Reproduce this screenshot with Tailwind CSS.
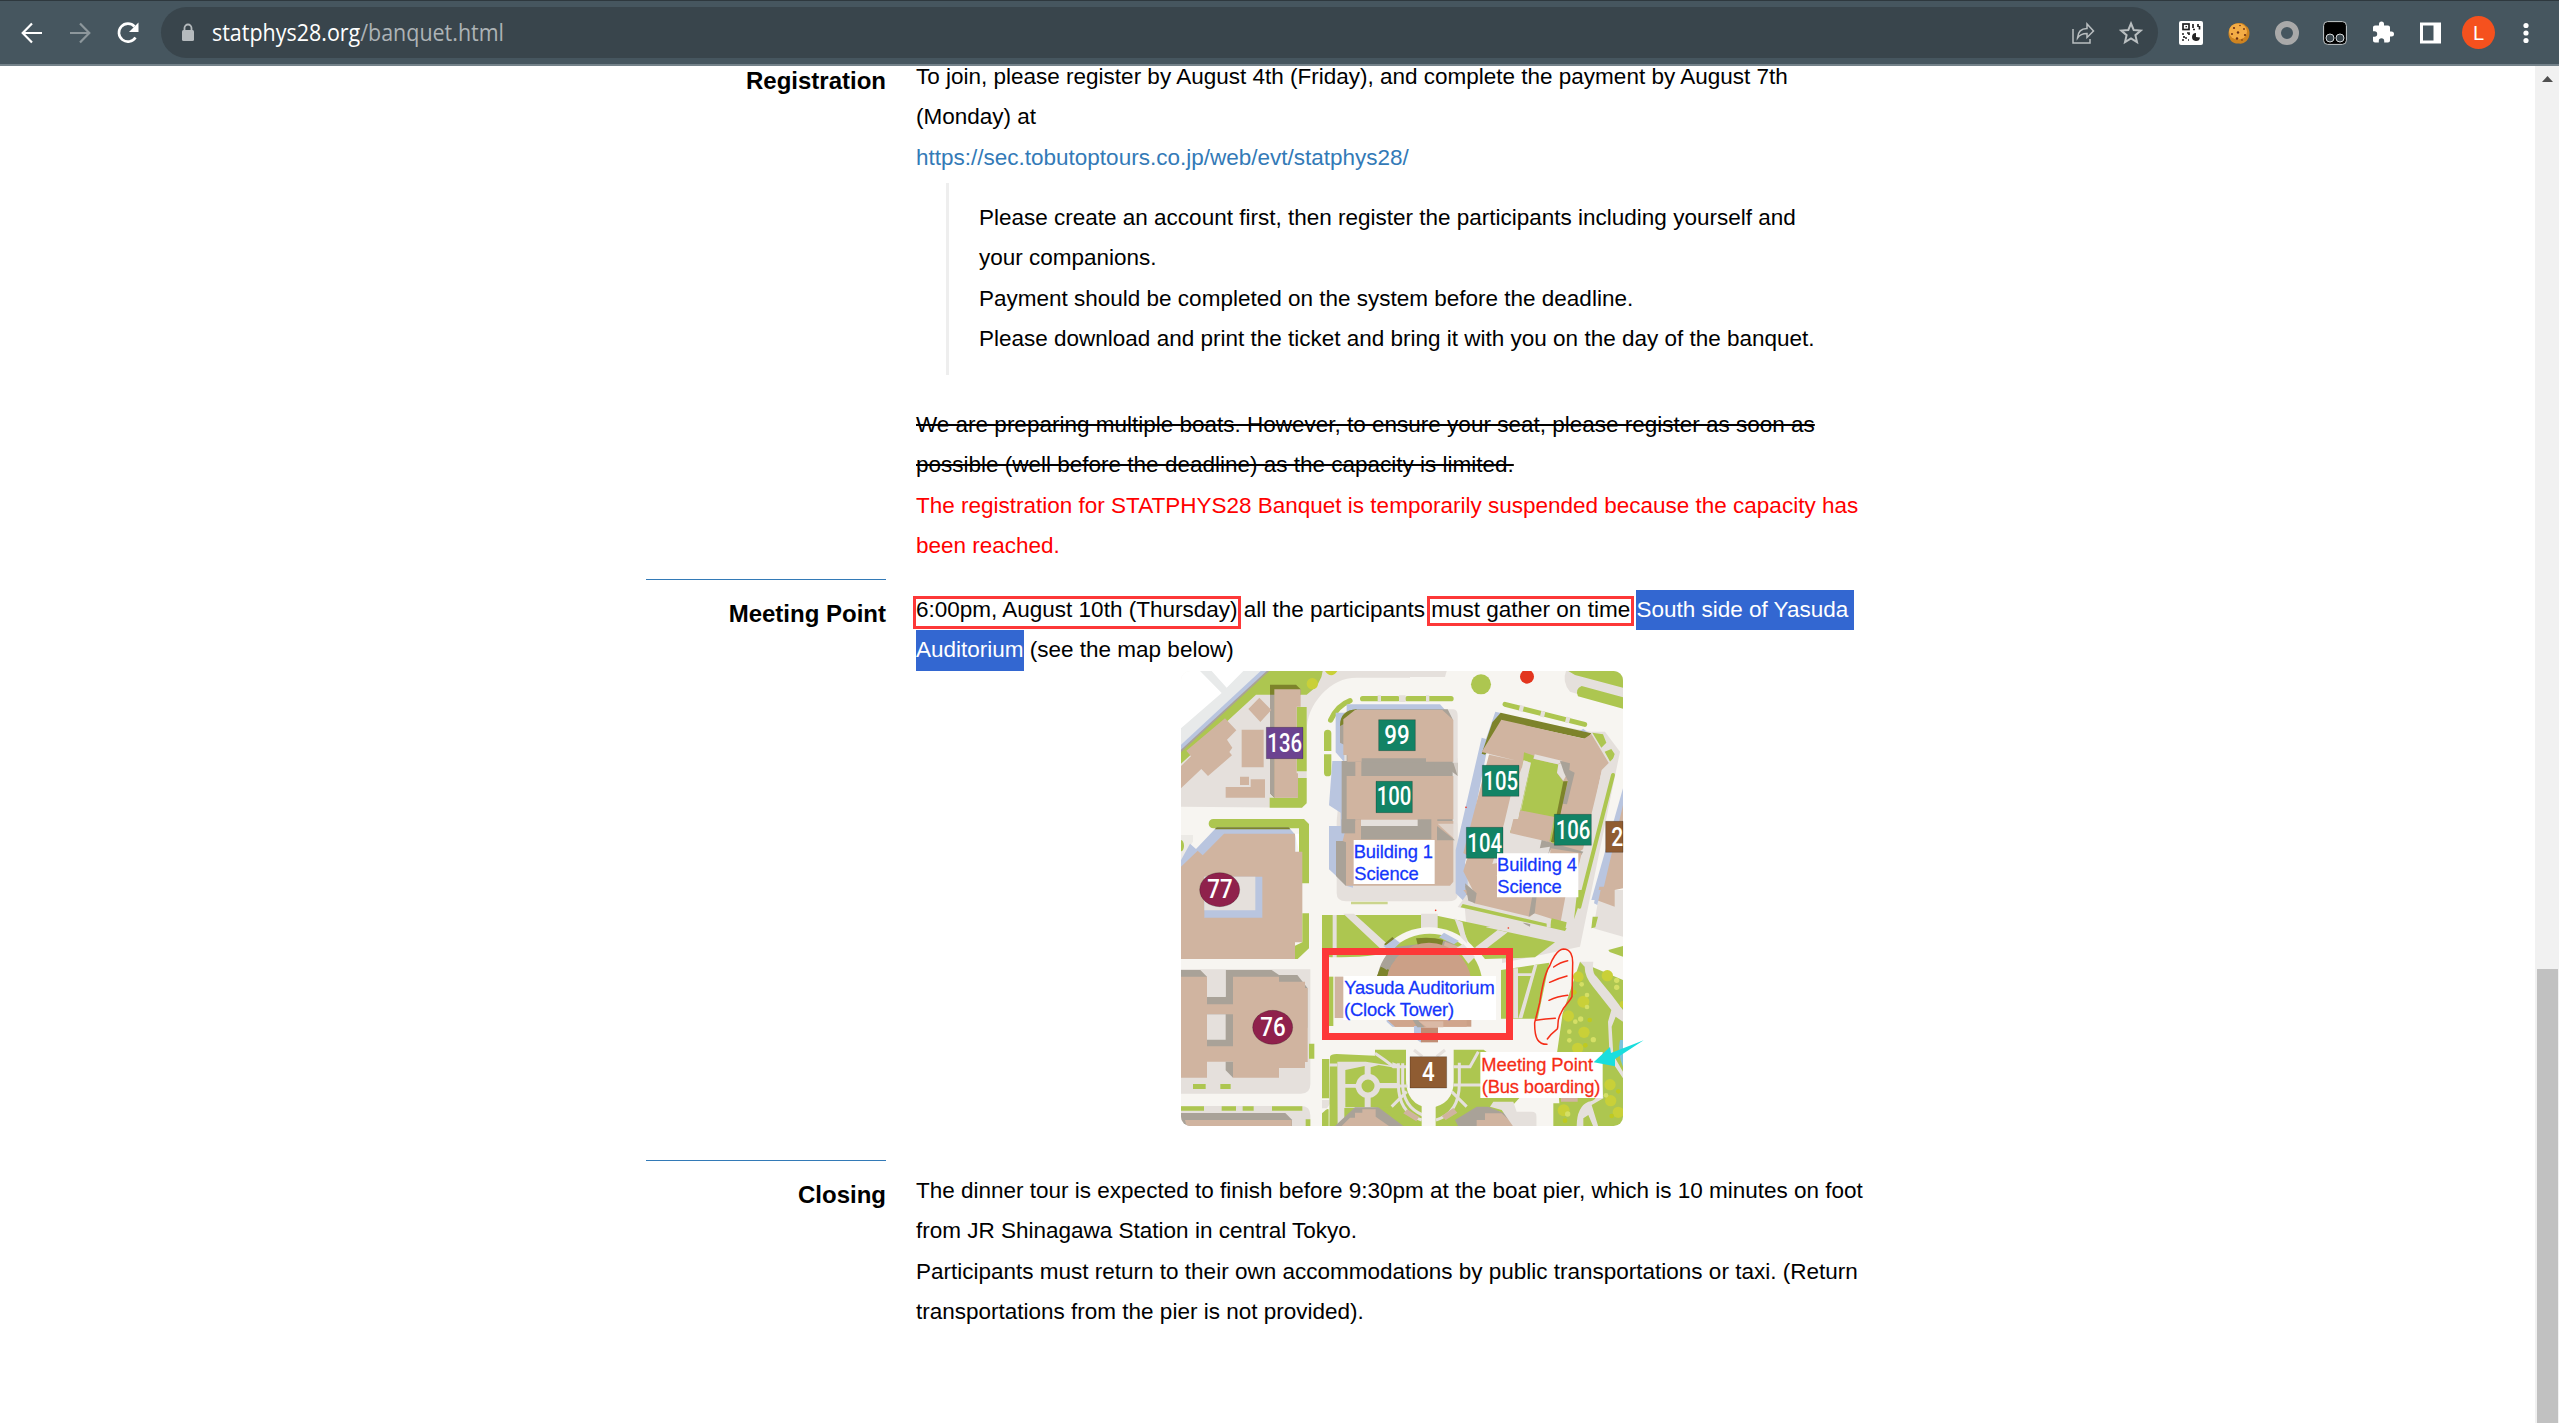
<!DOCTYPE html>
<html lang="en">
<head>
<meta charset="utf-8">
<title>STATPHYS28 Banquet</title>
<script src="https://cdn.jsdelivr.net/npm/@tailwindcss/browser@4"></script>
</head>
<body class="bg-white">
<div class="flex h-[1423px] w-[2559px] flex-col overflow-hidden font-['Liberation_Sans',Arial,sans-serif] text-black">
  <!-- Browser toolbar -->
  <header class="flex h-[66px] shrink-0 items-center border-t border-b-2 border-t-[#2e383e] border-b-[#74828a] bg-[#46565f] pr-[16px] pl-[20px]">
    <div class="flex w-[141px] items-center gap-[24px]">
      <svg class="size-6" viewBox="0 0 24 24" fill="none" stroke="#fff" stroke-width="2.2"><path d="M22 12H3M12 2.5 2.7 12l9.3 9.500"/></svg>
      <svg class="size-6" viewBox="0 0 24 24" fill="none" stroke="#8d979c" stroke-width="2.2"><path d="M2 12h19M12 2.500 21.300 12 12 21.500"/></svg>
      <svg class="size-6" viewBox="0 0 24 24"><path d="M19.500 16.500A9 9 0 1 1 18.500 5.500" fill="none" stroke="#fff" stroke-width="2.600"/><path d="M22.500 1.500v9.500H13z" fill="#fff"/></svg>
    </div>
    <div class="flex h-[51px] w-[1997px] items-center rounded-full bg-[#39454c] pr-[15px] pl-[20px]">
      <svg class="h-[20px] w-[14px]" viewBox="0 0 14 20"><rect x="1" y="7" width="12" height="11" rx="1.500" fill="#b5babd"/><path d="M3.500 8V5a3.500 3.500 0 0 1 7 0v3" fill="none" stroke="#b5babd" stroke-width="1.800"/></svg>
      <svg class="ml-[17px] h-[40px] w-[340px] overflow-visible" viewBox="0 0 340 40"><text x="0" y="27.500" font-family="Open Sans, Noto Sans, sans-serif" font-size="23.500" fill="#fff" textLength="292" lengthAdjust="spacingAndGlyphs">statphys28.org<tspan fill="#adb3b6">/banquet.html</tspan></text></svg>
      <div class="ml-auto flex items-center gap-[24px]">
        <svg class="size-6" viewBox="0 0 24 24" fill="none" stroke="#b9bec0" stroke-width="1.500"><path d="M2 8v14h17v-4"/><path d="M6.500 17C7 10 10 7.500 16 7.500V3l6.500 7-6.500 6.500V12.500C11 12.500 8.500 14 6.500 17Z"/></svg>
        <svg class="size-6" viewBox="0 0 24 24" fill="none" stroke="#b9bec0" stroke-width="2"><path d="m12 2.500 2.700 6.500 7 .6-5.300 4.600 1.600 6.900L12 17.400l-6 3.700 1.600-6.900-5.300-4.600 7-.6z"/></svg>
      </div>
    </div>
    <div class="ml-[21px] flex items-center">
      <svg class="size-6" viewBox="0 0 24 24"><rect width="24" height="24" rx="2" fill="#fff"/><g fill="none" stroke="#222" stroke-width="1.700"><rect x="4" y="3" width="6" height="5.500"/><path d="M14 3v4M19 3v3M20.500 5v3.500M14 8.500h2M3 13h2M8 12h2v2M5 15v2M8 17H6M3 19h2M9 19h1"/></g><path d="M6.500 5h1.500v1.300H6.500z" fill="#222"/><path d="M17 12v4l4 .5a4 4 0 1 1-4-4.500z" fill="#222"/></svg>
      <svg class="ml-6 size-6" viewBox="0 0 24 24"><path d="M12 2c3 0 5 .5 7 3 2 1 3.500 4 3.500 7s-1 6-3 8-5 3-8 2.500C8 23 4 21 3 18c-1.500-2-2-6-1-9 1-4 5-7 10-7z" fill="#cf8420"/><ellipse cx="11" cy="10.500" rx="9" ry="8" fill="#f3ac45"/><g fill="#6b2e14"><circle cx="7" cy="7" r="1.100"/><circle cx="13" cy="4.500" r=".8"/><circle cx="17" cy="8" r=".9"/><circle cx="11" cy="11.500" r="1.200"/><circle cx="5" cy="13" r="1"/><circle cx="18" cy="14" r="1.100"/><circle cx="10" cy="17.500" r="1.200"/><circle cx="15" cy="19" r=".8"/></g></svg>
      <svg class="ml-6 size-6" viewBox="0 0 24 24"><circle cx="12" cy="12" r="9" fill="none" stroke="#a9a9a9" stroke-width="6"/></svg>
      <svg class="ml-6 size-6" viewBox="0 0 24 24"><rect x=".6" y=".6" width="22.800" height="22.800" rx="4" fill="#000" stroke="#c4cacc" stroke-width="1"/><g fill="#37434a" stroke="#d7dadb"><circle cx="7" cy="17" r="4"/><circle cx="17" cy="17" r="4"/></g></svg>
      <svg class="ml-6 size-6" viewBox="0 0 24 24"><path d="M20.500 11H19V7c0-1.100-.9-2-2-2h-4V3.500a2.500 2.500 0 0 0-5 0V5H4c-1.100 0-2 .9-2 2v3.800h1.500a2.700 2.700 0 0 1 0 5.400H2V20c0 1.100.9 2 2 2h3.800v-1.500a2.700 2.700 0 0 1 5.400 0V22H17c1.100 0 2-.9 2-2v-4h1.500a2.500 2.500 0 0 0 0-5z" fill="#fff" transform="translate(0 -.5)"/></svg>
      <svg class="ml-6 size-6" viewBox="0 0 24 24"><path d="M1 1.500h21v21H1z" fill="#fff"/><path d="M4 4.500h10.500v15H4z" fill="#46565f"/></svg>
      <div class="ml-[19px] flex size-[33px] items-center justify-center rounded-full bg-[#f5511e] text-xl leading-none text-white">L</div>
      <svg class="ml-[19px] size-6" viewBox="0 0 24 24" fill="#fff"><circle cx="12" cy="4.500" r="2.600"/><circle cx="12" cy="12" r="2.600"/><circle cx="12" cy="19.500" r="2.600"/></svg>
    </div>
  </header>

  <div class="flex min-h-0 flex-1">
    <main class="min-w-0 flex-1 overflow-hidden pl-[646px]">
      <dl class="-mt-[9.5px] w-[1242px] text-[22.5px] leading-[40.5px]">
        <div class="flex h-[522.5px] gap-[30px]">
          <dt class="w-[240px] pt-[4.5px] text-right text-[24px] font-bold">Registration</dt>
          <dd class="w-[972px] whitespace-nowrap">
            <p>To join, please register by August 4th (Friday), and complete the payment by August 7th<br>(Monday) at<br><a class="text-[#337ab7]">https://sec.tobutoptours.co.jp/web/evt/statphys28/</a></p>
            <blockquote class="mt-[4.5px] mb-[30px] ml-[30px] border-l-3 border-[#eee] py-[15px] pl-[30px]">Please create an account first, then register the participants including yourself and<br>your companions.<br>Payment should be completed on the system before the deadline.<br>Please download and print the ticket and bring it with you on the day of the banquet.</blockquote>
            <p class="line-through decoration-[2px]">We are preparing multiple boats. However, to ensure your seat, please register as soon as<br>possible (well before the deadline) as the capacity is limited.</p>
            <p class="text-[#f00]">The registration for STATPHYS28 Banquet is temporarily suspended because the capacity has<br>been reached.</p>
          </dd>
        </div>

        <div class="flex h-[581px] gap-[30px]">
          <dt class="w-[240px] text-right text-[24px] font-bold"><div class="border-t border-[#337ab7] pt-[14px]">Meeting Point</div></dt>
          <dd class="w-[972px] pt-[10.6px] whitespace-nowrap">
            <p><span class="relative">6:00pm, August 10th (Thursday)<span class="absolute -top-[1px] -right-[4px] -left-[3px] h-[33px] border-3 border-[#fd3838]"></span></span> all the participants <span class="relative">must gather on time<span class="absolute -top-[1px] -right-[4px] -left-[4px] h-[30px] border-3 border-[#fd3838]"></span></span> <span class="inline-block h-[40.5px] bg-[#3367d1] pr-[6px] align-top text-white">South side of Yasuda</span><br><span class="inline-block h-[40.5px] bg-[#3367d1] align-top text-white">Auditorium</span> (see the map below)</p>
            <svg class="mx-auto mt-[0.4px] block h-[455px] w-[442px] overflow-visible" viewBox="0 0 1326 1365" font-family="Liberation Sans, Arial, sans-serif">
              <defs><clipPath id="round"><rect width="1326" height="1365" rx="28"/></clipPath></defs>
              <g clip-path="url(#round)">
                <rect width="1326" height="1365" fill="#f7f5f1"/>
                <!-- north west block -->
                <g transform="translate(-33 -33)">
                  <path d="M33 33H290L33 270z" fill="#fff"/>
                  <path d="M90 33h35l45 50 50-50h60L33 255v-50L155 99z" fill="#e8eaea"/>
                  <path d="M33 440V290L290 33h430v20H560q-60 0-105 50-45 50-45 110v210l-15 20z" fill="#e5e0dc"/>
                  <path d="M272 33h20L33 272v-18z" fill="#b9c5df"/>
                  <path d="M290 33h10L33 281v-12z" fill="#a9a298"/>
                  <path d="M298 33h160q-3 40-48 71H258L33 311v-34z" fill="#adc650"/>
                  <circle cx="427" cy="71" r="17" fill="#c9d038"/><path d="M465 33h37q-18 26-37 0zM560 32h10M640 32h5" fill="#c9d038"/>
                  <path d="M300 74h78l14 14v16h-78v310l-14-14z" fill="#7d832b"/><path d="M300 104h14v310l-14-14z" fill="#a9a298"/>
                  <path d="M380 141h30v193h-30zM383 354h27v76l-14 13h-97v-30h84z" fill="#adc650"/>
                  <g fill="#d0b4a0"><path d="M313 88h79v52h-12v200h4v73h-71zM268 113l36 37-33 36-36-39zM215 209h66v113h-66zM210 350h27v25h-27zM167 381h75v-23h43v55H167zM165 175l34 36-28 28 16 24-9 13 8 10-72 62-20-21-62 59v-67l31-30-14-17z"/></g>
                  <path d="M33 525h36v20l-10 15-26 40z" fill="#eceae6"/>
                  <ellipse cx="33" cy="557" rx="9" ry="17" fill="#adc650"/>
                  <path d="M130 477h272l15 15v178h-30V505H130a13 13 0 0 1 0-28z" fill="#adc650"/>
                  <path d="M140 502h216l20 22v52h-12L165 560l-70 60-62 40v-60l27-49 18 16z" fill="#b9c5df"/>
                  <path d="M140 502h216l5 6H134z" fill="#7d832b"/>
                  <path d="M375 521h12v55z" fill="#fff"/>
                  <path d="M162 521h213v54h22v272h-22v50H33V620l50-48 15 14z" fill="#d0b4a0"/>
                  <path d="M103 650h174v123H103z" fill="#b9c5df"/><path d="M103 650h153v101H103z" fill="#e5e0dc"/>
                  <path d="M397 760h20v105l-34 32h-8v-40l22-10z" fill="#adc650"/>
                </g>
                <!-- science building 1 -->
                <path d="M640 0h157l-5 18H520z" fill="#e5e0dc"/>
                <g fill="none" stroke="#adc650" stroke-width="16" stroke-linecap="round">
                  <path d="M449 147q20-44 58-58"/><path d="M545 83h104M680 83h130"/>
                </g>
                <path d="M429 187a11 11 0 0 1 22 0v53h-22zM429 250h22v55a11 11 0 0 1-22 0z" fill="#adc650"/>
                <path d="M590 73h10v20h-10zM654 73h20v20h-20zM735 73h10v20h-10z" fill="#e5e0dc"/>
                <path d="M500 115h317q13 0 13 20v536q0 20-30 20H495q-28 0-28-25V450z" fill="#e5e0dc"/>
                <path d="M497 100h280l22 24H490v150l-26-30V125h33zM454 270h40v250h22v130l-18-5-54-50V465h35v-40l-35-22z" fill="#b9c5df"/>
                <path d="M477 165q0-50 55-50h268l15 30v340H482V270h15v-45l-20-10zM465 510h30v135l-30-30z" fill="#a9a298"/>
                <path d="M477 165q0-48 50-50l-10 30z" fill="#7d832b"/>
                <path d="M487 145l35-28h262l33 30v125h-82v-10H542v10h-43V252h-12zM497 315h320v130h-48l-2 50H540v-50h-43zM485 510l15-60h317v182l-10 12H495v-130z" fill="#d0b4a0"/>
                <path d="M482 445h41v42h-41z" fill="#a9a298"/>
                <path d="M523 273h18v42h-18zM523 445h17v48h-17z" fill="#d0b4a0"/>
                <path d="M543 275h218v38H543z" fill="#a9a298"/><path d="M540 446h180v20H540z" fill="#e5e0dc"/><path d="M540 465h170v-20h41v60H540z" fill="#a9a298"/>
                <path d="M778 275h52v40zM768 465l54 43h-54z" fill="#a9a298"/><path d="M817 275l13-15v55zM770 458h60v55z" fill="#e5e0dc" opacity=".7"/>
                <path d="M510 692h110v8H510z" fill="#cbd58c"/>
                <!-- science building 4 -->
                <g transform="translate(657 -33)">
                  <path d="M505 33h164v110L510 95q-25-30-12-62z" fill="#e5e0dc"/>
                  <path d="M505 33h142q22 0 22 22v28L525 45zM545 78l124 34v34l-135-37q-10-22 11-31z" fill="#adc650"/>
                  <circle cx="243" cy="73" r="30" fill="#adc650"/><circle cx="381" cy="50" r="21" fill="#e3351e"/>
                  <path d="M315 133 554 193" stroke="#adc650" stroke-width="15" stroke-linecap="round"/><path d="m358 144 12 3M422 161l12 3M497 178l12 3" stroke="#e5e0dc" stroke-width="18"/>
                  <path d="M190 690 290 165l285 50h40l45 60L540 860 210 930z" fill="#e5e0dc"/>
                  <path d="M286 155l20 5-46 115-65 335 8 15v110l-36-35V570l78-337 13 4zM540 212l10-6 14 12-4 8z" fill="#b9c5df"/>
                  <path d="M277 187 302 158l272 62-12 18-256-56-18 76 85 20-5 10-99-21-14 17-10-3z" fill="#7d832b"/>
                  <path d="M577 218l32 5 10 25-15 15zM614 275l20-8 10 15-10 30z" fill="#adc650"/>
                  <path d="M304 179 552 236l22-14 56 93-25 20-56 233-50 32-30 140-69 24-180-70-30-60 10-35 7-10-17-10 77-295 105 23-40 100-20 85-35 120 130-28 45-180-12-80-195-48z" fill="#d0b4a0"/>
                  <path d="M372 277l30 10-3 9 80 18-8 25 20 28 12-4-33 140-5 60-10-12 5-80-107-18z" fill="#adc650"/>
                  <path d="M370 300l22 8-40 170-22 40-40 130 110 50 60-120-30-50 60 15-45-20-90-35 33-150z" fill="#e5e0dc"/>
                  <path d="M404 283l84 20-15 10-72-17zM475 312l20-5 3 40-8 15-19-24z" fill="#e5e0dc"/>
                  <path d="M372 305 395 308 362 450l98 20-5 75-125-28 15-40 10 0z" fill="#adc650"/><path d="M370 302l23 6-38 168h-18z" fill="#e5e0dc"/>
                  <path d="M360 451l103 20-15 75-118-27 10-42h15z" fill="#d0b4a0"/>
                  <path d="M480 302l30 8-2 20 16 8-23 95-14-2 17-68-12-25z" fill="#a9a298"/><path d="M490 364h13l-40 182h-10z" fill="#7d832b"/>
                  <path d="M425 540l125 35-8 12-92-17-50 150-10 80-20-10z" fill="#a9a298"/>
                  <path d="M452 565l93 15-40 165-70-20z" fill="#d0b4a0"/>
                  <path d="M450 560l-35 145-85-20 20-110z" fill="#e5e0dc"/>
                  <path d="M605 330l50-50-115 480-20-5z" fill="#e5e0dc"/><path d="M639 345 538 740" stroke="#adc650" stroke-width="12" stroke-linecap="round"/>
                  <path d="M669 385v60l-55 245-25 30h-15z" fill="#b9c5df"/><path d="M669 435v250l-25 5-10 50-35-5z" fill="#d0b4a0"/>
                  <path d="M195 675l33 35v30h-25z" fill="#a9a298"/>
                </g>
                <!-- lawns around the auditorium -->
                <g transform="translate(417 537)">
                  <path d="M6 195h295l50 2 185 39 4 40-90 50-200 0H6z" fill="#adc650"/>
                  <path d="M38 195h12v130H38zM70 191h32l110 100-20 15zM303 191h50v60h-50zM403 205l15 8 30 70-18-5zM500 230h40v40l-40 30-40 0z" fill="#e5e0dc"/>
                  <path d="M6 320q90 5 160-5h380v210H6z" fill="#f7f5f1"/>
                  <path d="M6 380h34v148H6z" fill="#adc650"/>
                  <path d="M44 380h62v124H44z" fill="#d0b4a0"/>
                  <circle cx="328" cy="410" r="178" fill="#f7f5f1"/>
                  <path d="M170 410a158 158 0 0 1 318 0z" fill="#adc650"/>
                  <path d="M170 400a158 158 0 0 1 50-108l160-20 30 15-20 30-150 10-50 75z" fill="#a9a298"/>
                  <path d="M190 288l30-25 20 15-28 28zM357 262l15-14 45 25-15 10z" fill="#b9c5df"/>
                  <path d="M288 265q45-6 82 5l-6 22-70-5zM170 380l12-30 25 9-6 25zM192 283l25-22 6 5-26 20z" fill="#7d832b"/>
                  <path d="M375 275l42 15-18 25-30-20z" fill="#d0b4a0"/><path d="M410 293l20-12 35 40-20 20z" fill="#e5e0dc"/>
                  <path d="M200 390a128 128 0 0 1 254 0v140H225z" fill="#cba087"/><path d="M200 360 226 330 216 317l-30 33z" fill="#a9a298"/>
                  <path d="M200 510l22 20h218v-20z" fill="#d0a58c"/><path d="M200 508l25 22h-8l-17-15zM282 528h22v50l-22-15z" fill="#b9c5df"/>
                  <path d="M303 532h51v45h-51z" fill="#c18d74"/><path d="M278 510h16l20 22h-22z" fill="#a9a298"/><path d="M296 514h74v18h-50z" fill="#dab9a6"/>
                </g>
                <g transform="translate(657 657)">
                  <path d="M210 0h285l20-20 20 0-12 115-10 28-35 0-305-72z" fill="#e5e0dc"/>
                  <path d="M190 0h310l-18 95-80-25-12 10-168-40z" fill="#d0b4a0"/><path d="M195 -20l35 30-5 30-20-8zM400 0h12l-8 70-18 10z" fill="#a9a298"/>
                  <path d="M188 42 500 115l-5 8L182 52zM455 85l45 12-4 20-46-12zM522 88l30-88-20 0z" fill="#adc650"/><path d="M440 93h12v20h-12z" fill="#e5e0dc"/>
                  <path d="M185 96 465 157l-60 45-150 5-30-35z" fill="#adc650"/><path d="M293 120l30 7-85 65-12-20zM170 90l17 6 15 65-20-20z" fill="#e5e0dc"/>
                  <path d="M600 0h69v140l-89-25z" fill="#e5e0dc"/><path d="M598-10h46v60l-55-20z" fill="#d0b4a0"/><path d="M590 0h12l-10 45-10-5z" fill="#b9c5df"/><path d="M578 80h16l-8 32-12 3zM625 180l44-12v32l-40-14z" fill="#adc650"/>
                  <path d="M303 240l145-22-35 168H303z" fill="#adc650"/><path d="M340 235h14v150h-14zM402 225h10l-45 160h-12zM340 250h60v8h-60z" fill="#e5e0dc"/>
                  <path d="M540 215l129 55v440H458v-70h20l-10-130 20-140z" fill="#adc650"/>
                  <path d="M540 215h40q-5 35 10 45l45 55 34 45v35l-22-15-12 30 5 85 29 50v20l-40-60-5-110 10-35-55-70q-25-30-25-60zM530 710q0-60 35-75 35-3 30-60l10-5 5 55-35 20 20 65h-15l-15-35-15 10v25z" fill="#e5e0dc"/>
                  <path d="M660 450h9v80q-18-40-9-80z" fill="#7cc4dc"/>
                  <g fill="#c9d038"><circle cx="535" cy="260" r="16"/><circle cx="622" cy="257" r="17"/><circle cx="550" cy="335" r="18"/><circle cx="505" cy="378" r="17"/><circle cx="552" cy="427" r="17"/><circle cx="533" cy="475" r="17"/><circle cx="630" cy="584" r="17"/><circle cx="632" cy="632" r="17"/><circle cx="491" cy="661" r="18"/><circle cx="655" cy="667" r="17"/><circle cx="669" cy="343" r="10"/></g>
                  <g fill="#bfca20"><circle cx="523" cy="307" r="7"/><circle cx="569" cy="390" r="7"/><circle cx="556" cy="466" r="7"/><circle cx="655" cy="604" r="7"/><circle cx="495" cy="692" r="7"/><circle cx="635" cy="678" r="7"/></g>
                  <g fill="#d5df65"><circle cx="545" cy="283" r="7"/><circle cx="561" cy="315" r="7"/><circle cx="561" cy="351" r="7"/><circle cx="542" cy="387" r="8"/><circle cx="526" cy="395" r="7"/><circle cx="508" cy="425" r="7"/><circle cx="580" cy="449" r="8"/><circle cx="508" cy="451" r="7"/><circle cx="650" cy="271" r="8"/><circle cx="650" cy="292" r="8"/><circle cx="618" cy="616" r="7"/><circle cx="503" cy="672" r="8"/></g>
                </g>
                <!-- formal gardens -->
                <g transform="translate(417 537)">
                  <path d="M6 627h22v118H6zM6 790q20-20 20-10v50H6z" fill="#adc650"/><path d="M28 720v30H6v25l15 0 20-30z" fill="#e5e0dc"/>
                  <path d="M30 620q2-8 20-8l115 5v-18h93v90q0 75 70 85 75-10 73-85v-90h90l120 90-8 50-120 130H245l-30-30H73v55H6l22-60z" fill="#adc650"/>
                  <path d="M52 635h85l80 12v-10l15 5v120l-75 12H73v50l-20 10z" fill="#e5e0dc"/>
                  <path d="M76 660 134 648v42l-27 12H76zM152 652l24-7 58 10v44h-54l-28-12zM76 713h30q12 20 28 22v37H76zM180 715h54q5 20 20 35l-30 22h-72v-38q20-5 28-19z" fill="#adc650"/>
                  <circle cx="144" cy="708" r="28" fill="#adc650" stroke="#e5e0dc" stroke-width="17"/>
                  <path d="M28 645h24M165 610q30 20 55 40h38M235 640v60q0 90 70 110M248 640v60q0 70 60 95M400 650h50l25-45M418 638v62q0 90-70 110M400 705h120M180 708h90M215 770l45-45M440 770l-45-45M282 600l25 20M375 600l-25 20" fill="none" stroke="#e5e0dc" stroke-width="9"/>
                  <path d="M262 600h14v90q0 57 52 57 55 0 55-57v-90h14v90q0 60-50 75v65h-42v-65q-43-15-43-75z" fill="#f7f5f1"/>
                  <path d="M250 790l12-12 35 22-8 14zM365 798l35-24 12 14-35 22z" fill="#d0b4a0"/>
                  <path d="M105 772h70l75 56H45z" fill="#a9a298"/><path d="M65 828l25-25h15v-15h22v-10h40v22l40 28zM455 828l40-35h25l20-10v45z" fill="#d0b4a0"/>
                </g>
                <g transform="translate(657 657)">
                  <path d="M165 690l65-40h35l145 60H175z" fill="#a9a298"/><path d="M230 710v-20h25v-20h50l45 40z" fill="#d0b4a0"/><path d="M270 650l35 10 35 50 70 0v-30q0-15-15-15h-45l-10-30h-60z" fill="#e5e0dc"/><path d="M410 620h50v90h-50z" fill="#f7f5f1"/><path d="M483 620h50v15h-50z" fill="#d0b4a0"/>
                </g>
                <!-- south west block -->
                <g transform="translate(-33 657)">
                  <path d="M33 238h388v345q0 28-28 28H33zM33 648h360q28 0 28 28v34H33z" fill="#e5e0dc"/>
                  <path d="M33 240h58l20 20v61h56v-81h138l22 15h55l30 38v120H33z" fill="#a9a298"/>
                  <path d="M111 240h56v80h-56z" fill="#e5e0dc"/>
                  <path d="M33 260h78v303H33zM189 260h138v15h78v19h8v222h-8v18h-78v29H189zM111 343h80v172h-80z" fill="#d0b4a0"/>
                  <path d="M111 373h78v96h-78zM167 515h22v48l-22-22z" fill="#a9a298"/><path d="M111 373h56v76h-56z" fill="#e5e0dc"/>
                  <path d="M417 461h16v45h-16zM69 582h38v15H69zM151 582h31v15h-31zM33 649h69v13H33zM155 649h43v13h-43zM218 649h33v13h-33zM306 649h91v13h-91zM407 688h14v22h-14z" fill="#adc650"/>
                  <path d="M33 669h313l20 20v21H33z" fill="#a9a298"/><path d="M45 690h320v20H50z" fill="#d0b4a0"/>
                </g>
              </g>
              <!-- numbered markers -->
              <g stroke="#00000055" stroke-width="2">
                <path d="M256 169h110v94H256z" fill="#6c4390"/><path d="M593 146h110v93H593zM585 331h109v94H585zM904 283h110v93H904zM856 469h110v93H856zM1120 430h111v93h-111z" fill="#128365"/>
                <path d="M1274 451h52v93h-52zM687 1157h110v94H687z" fill="#8f5c32"/>
                <ellipse cx="116" cy="656" rx="60" ry="51" fill="#8f214c"/><ellipse cx="275" cy="1069" rx="60" ry="51" fill="#8f214c"/>
              </g>
              <g fill="#fff" font-size="75" font-weight="500" font-family="Roboto, sans-serif" text-anchor="middle">
                <text x="311" y="242" textLength="104" lengthAdjust="spacingAndGlyphs">136</text>
                <text x="648" y="218" textLength="76" lengthAdjust="spacingAndGlyphs">99</text>
                <text x="639" y="403" textLength="104" lengthAdjust="spacingAndGlyphs">100</text>
                <text x="959" y="356" textLength="104" lengthAdjust="spacingAndGlyphs">105</text>
                <text x="911" y="542" textLength="104" lengthAdjust="spacingAndGlyphs">104</text>
                <text x="1176" y="503" textLength="104" lengthAdjust="spacingAndGlyphs">106</text>
                <text x="1309" y="524" textLength="36" lengthAdjust="spacingAndGlyphs">2</text>
                <text x="742" y="1231" textLength="38" lengthAdjust="spacingAndGlyphs">4</text>
                <text x="117" y="682" textLength="76" lengthAdjust="spacingAndGlyphs">77</text>
                <text x="276" y="1096" textLength="76" lengthAdjust="spacingAndGlyphs">76</text>
              </g>
              <!-- place captions -->
              <path d="M518 507h243v132H518zM948 547h244v132H948zM487 915h458v132H487zM898 1143h367v138H898z" fill="#fff"/>
              <g fill="#1436fb" stroke="#1436fb" stroke-width=".8" font-size="55">
                <text x="518" y="561" textLength="238">Building 1</text><text x="520" y="626" textLength="193">Science</text>
                <text x="948" y="601" textLength="240">Building 4</text><text x="949" y="667" textLength="193">Science</text>
                <text x="490" y="969" textLength="451">Yasuda Auditorium</text><text x="489" y="1035" textLength="330">(Clock Tower)</text>
              </g>
              <g fill="#f52d17" stroke="#f52d17" stroke-width=".8" font-size="55"><text x="901" y="1200" textLength="335">Meeting Point</text><text x="902" y="1266" textLength="356">(Bus boarding)</text></g>
              <path d="M433.500 841.500h552v255h-552z" fill="none" stroke="#fd3838" stroke-width="21"/>
              <g transform="translate(657 657)" fill="none" stroke="#f52d17" stroke-width="4.500" stroke-linecap="round">
                <path d="M441 463c-25 0-38-15-37-65 5-20 8-30 15-60 5-30 12-85 30-110 5-15 22-50 41-51 22 0 29 20 28 45l-2 98c-10 20-22 23-32 47-15 25-7 32-12 50-10 8-20 15-30 30M461 231q20-15 42-19M449 277q25-12 52-19M447 331q25-12 56-15M407 391q30-5 59-6"/>
              </g>
              <circle cx="764" cy="718" r="2.500" fill="#f52d17"/><circle cx="982" cy="771" r="2.500" fill="#f52d17"/><circle cx="855" cy="409" r="2.500" fill="#f52d17"/>
              <path d="m1238 1174 49-46 3 18 98-38-86 56 0 22z" fill="#19dede"/>
            </svg>
          </dd>
        </div>

        <div class="flex gap-[30px]">
          <dt class="w-[240px] text-right text-[24px] font-bold"><div class="border-t border-[#337ab7] pt-[14px]">Closing</div></dt>
          <dd class="w-[972px] pt-[10.6px] whitespace-nowrap">The dinner tour is expected to finish before 9:30pm at the boat pier, which is 10 minutes on foot<br>from JR Shinagawa Station in central Tokyo.<br>Participants must return to their own accommodations by public transportations or taxi. (Return<br>transportations from the pier is not provided).</dd>
        </div>
      </dl>
    </main>
    <!-- Scrollbar -->
    <div class="flex w-[24px] flex-col bg-[#f1f1f1]">
      <svg class="mt-[8px] h-[10px] w-full" viewBox="0 0 24 10"><path d="m7 8 5.500-6L18 8z" fill="#505050"/></svg>
      <div class="mt-[885px] mr-[1px] ml-[2px] flex-1 bg-[#c1c1c1]"></div>
    </div>
  </div>
</div>
</body>
</html>
